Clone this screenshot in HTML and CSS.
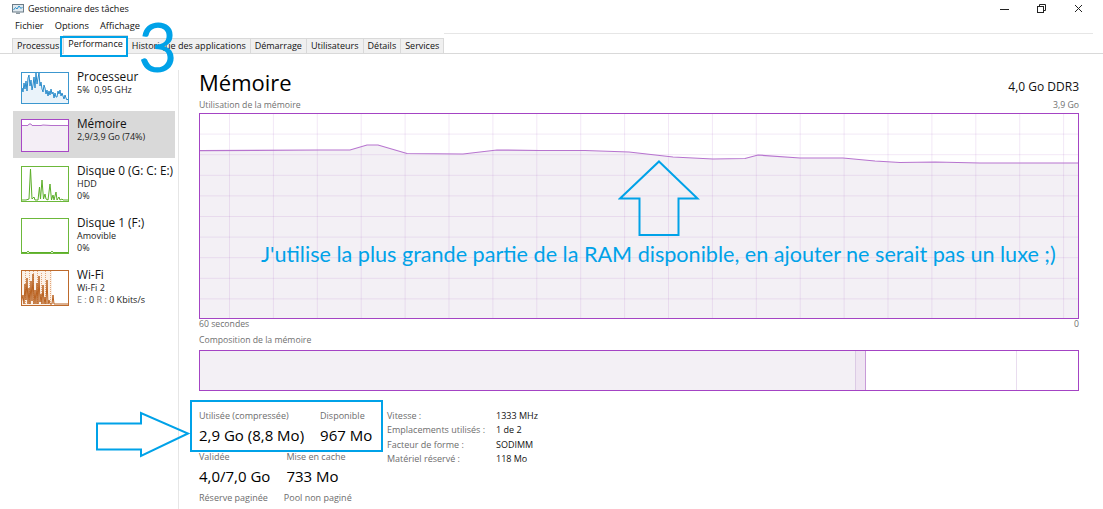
FILE: index.html
```html
<!DOCTYPE html>
<html lang="fr">
<head>
<meta charset="utf-8">
<title>Gestionnaire des tâches</title>
<link rel="stylesheet" href="styles.css">
</head>
<body>
<div class="window">
  <header class="titlebar">
    <svg class="app-icon" width="12" height="10" viewBox="0 0 12 10">
      <rect x="0.5" y="0.5" width="11" height="7.5" fill="#dfe8ee" stroke="#6b7c88"/>
      <polyline points="1.5,6 3.5,3.5 5,5 7,2 9,4.5 10.5,3" fill="none" stroke="#2a8fc9" stroke-width="1"/>
      <rect x="4" y="8.5" width="4" height="1.5" fill="#8a97a0"/>
    </svg>
    <span class="title">Gestionnaire des tâches</span>
    <div class="controls">
      <span class="ctl"><svg width="10" height="10" viewBox="0 0 10 10"><line x1="0" y1="5.5" x2="9" y2="5.5" stroke="#222" stroke-width="1"/></svg></span>
      <span class="ctl"><svg width="10" height="10" viewBox="0 0 10 10"><rect x="0.5" y="2.5" width="6" height="6" fill="none" stroke="#222"/><polyline points="2.5,2.5 2.5,0.5 8.5,0.5 8.5,6.5 6.5,6.5" fill="none" stroke="#222"/></svg></span>
      <span class="ctl"><svg width="10" height="10" viewBox="0 0 10 10"><line x1="1" y1="1" x2="8" y2="8" stroke="#222"/><line x1="8" y1="1" x2="1" y2="8" stroke="#222"/></svg></span>
    </div>
  </header>

  <nav class="menubar"><span>Fichier</span><span>Options</span><span>Affichage</span></nav>

  <div class="tabrow">
    <div class="tab">Processus</div>
    <div class="tab active">Performance</div>
    <div class="tab">Historique des applications</div>
    <div class="tab">Démarrage</div>
    <div class="tab">Utilisateurs</div>
    <div class="tab">Détails</div>
    <div class="tab">Services</div>
    <div class="tabfill"></div>
  </div>

  <div class="content">
    <aside class="sidebar">
      <div class="item">
        <svg class="thumb" width="48" height="32" viewBox="0 0 48 32">
          <polygon points="0,32 0,22 1,16 2,20 3,11 4,17 5,9 6,19 7,6 8,3 9,14 10,8 11,18 12,13 13,5 14,16 15,1 16,12 17,6 18,1 19,14 20,10 21,17 22,20 23,13 24,16 25,22 26,18 27,24 28,19 29,23 30,17 31,22 32,20 33,26 34,21 35,25 36,25 37,19 38,22 39,18 40,24 41,21 42,24 43,27 44,23 45,26 46,28 47,27 48,32" fill="#eaf3fa"/>
          <polyline points="0,22 1,16 2,20 3,11 4,17 5,9 6,19 7,6 8,3 9,14 10,8 11,18 12,13 13,5 14,16 15,1 16,12 17,6 18,1 19,14 20,10 21,17 22,20 23,13 24,16 25,22 26,18 27,24 28,19 29,23 30,17 31,22 32,20 33,26 34,21 35,25 36,25 37,19 38,22 39,18 40,24 41,21 42,24 43,27 44,23 45,26 46,28 47,27" fill="none" stroke="#2b8ccb" stroke-width="1"/>
          <rect x="0.5" y="0.5" width="47" height="31" fill="none" stroke="#3c97cf"/>
        </svg>
        <div class="itext">
          <div class="iname">Processeur</div>
          <div class="isub">5%&nbsp; 0,95 GHz</div>
        </div>
      </div>

      <div class="item selected">
        <svg class="thumb" width="48" height="33" viewBox="0 0 48 33">
          <rect x="0" y="0" width="48" height="33" fill="#fff"/>
          <polygon points="0,33 0,6.5 7,6.5 8,5 10,5 11,6.5 20,6.5 22,6 30,6.5 48,6.5 48,33" fill="#f4eef6"/>
          <polyline points="0,6.5 7,6.5 8,5 10,5 11,6.5 20,6.5 22,6 30,6.5 48,6.5" fill="none" stroke="#b46fcb" stroke-width="1"/>
          <rect x="0.5" y="0.5" width="47" height="32" fill="none" stroke="#a847c6"/>
        </svg>
        <div class="itext">
          <div class="iname">Mémoire</div>
          <div class="isub">2,9/3,9 Go (74%)</div>
        </div>
      </div>

      <div class="item tall">
        <svg class="thumb" width="48" height="36" viewBox="0 0 48 36">
          <polyline points="0,34 5,34 8,33 9.5,3 11,33 13,31 14,34 17,34 18.5,21 19.5,33 21,14 22.5,33 24,28 25,33 27,34 29,18 30.5,34 32,29 33,34 35,26 36,34 38,31 39,34 41,33 42,34 48,34" fill="none" stroke="#5bae28" stroke-width="1"/>
          <rect x="0.5" y="0.5" width="47" height="35" fill="none" stroke="#6cb83a"/>
        </svg>
        <div class="itext">
          <div class="iname">Disque 0 (G: C: E:)</div>
          <div class="isub">HDD</div>
          <div class="isub">0%</div>
        </div>
      </div>

      <div class="item tall">
        <svg class="thumb" width="48" height="36" viewBox="0 0 48 36">
          <polyline points="0,34.5 6,34.5 7,33 8,34.5 30,34.5 31,33 32,34.5 48,34.5" fill="none" stroke="#5bae28" stroke-width="1"/>
          <rect x="0.5" y="0.5" width="47" height="35" fill="none" stroke="#6cb83a"/>
        </svg>
        <div class="itext">
          <div class="iname">Disque 1 (F:)</div>
          <div class="isub">Amovible</div>
          <div class="isub">0%</div>
        </div>
      </div>

      <div class="item tall">
        <svg class="thumb" width="48" height="36" viewBox="0 0 48 36">
          <rect x="1" y="1" width="30" height="34" fill="#fbf1e8"/>
          <g stroke="#e4a577" stroke-width="1" stroke-dasharray="1 1">
            <line x1="4.5" y1="1" x2="4.5" y2="34"/>
            <line x1="8.5" y1="1" x2="8.5" y2="34"/>
            <line x1="12.5" y1="1" x2="12.5" y2="34"/>
            <line x1="16.5" y1="1" x2="16.5" y2="34"/>
            <line x1="20.5" y1="3" x2="20.5" y2="34"/>
            <line x1="24.5" y1="1" x2="24.5" y2="34"/>
            <line x1="29.5" y1="1" x2="29.5" y2="34"/>
          </g>
          <polyline points="0,34 2,25 3,34 4,14 5,30 6,8 7,34 8,18 9,34 10,11 11,31 12,4 13,34 14,20 15,34 16,13 17,34 18,6 19,32 20,24 21,34 22,15 23,34 24,27 25,34 26,10 27,34 28,30 29,34 31,34 32,25 33,34 48,34" fill="none" stroke="#b9611f" stroke-width="1"/>
          <rect x="0.5" y="0.5" width="47" height="35" fill="none" stroke="#bd6a2c"/>
        </svg>
        <div class="itext">
          <div class="iname">Wi-Fi</div>
          <div class="isub">Wi-Fi 2</div>
          <div class="isub"><span class="dim">E :</span> 0 <span class="dim">R :</span> 0 Kbits/s</div>
        </div>
      </div>
    </aside>

    <div class="divider"></div>

    <main class="main">
      <div class="head">
        <h1>Mémoire</h1>
        <span class="spec">4,0 Go DDR3</span>
      </div>
      <div class="axis top"><span>Utilisation de la mémoire</span><span>3,9 Go</span></div>
      <div class="graph">
        <svg width="878" height="204" viewBox="1 1 878 204">
          <defs>
            <pattern id="grid" x="30" y="0" width="43.9" height="20.6" patternUnits="userSpaceOnUse">
              <line x1="0.5" y1="0" x2="0.5" y2="20.6" stroke="#9a4fbb" stroke-opacity="0.13" stroke-width="1"/>
              <line x1="0" y1="0.5" x2="43.9" y2="0.5" stroke="#9a4fbb" stroke-opacity="0.13" stroke-width="1"/>
            </pattern>
          </defs>
          <polygon points="0,37.7 121,37 151,37 168,32 179,32 208,40.5 264,41 298,37 341,37.5 386,37.5 430,39 474,44 514,46 546,45.5 559,42 601,45 644,45 676,48 701,49.5 736,49 781,50 880,50 880,206 0,206" fill="#f3f0f5"/>
          <rect x="0" y="0" width="880" height="206" fill="url(#grid)"/>
          <polyline points="0,37.7 121,37 151,37 168,32 179,32 208,40.5 264,41 298,37 341,37.5 386,37.5 430,39 474,44 514,46 546,45.5 559,42 601,45 644,45 676,48 701,49.5 736,49 781,50 880,50" fill="none" stroke="#b774cf" stroke-width="1.2"/>
        </svg>
        <p class="note">J'utilise la plus grande partie de la RAM disponible, en ajouter ne serait pas un luxe ;)</p>
      </div>
      <div class="axis"><span>60 secondes</span><span>0</span></div>
      <div class="axis comp-label"><span>Composition de la mémoire</span></div>
      <div class="comp">
        <div class="seg used"></div>
        <div class="seg modified"></div>
        <div class="seg standby"></div>
        <div class="seg free"></div>
      </div>

      <div class="stats">
        <div class="stats-left">
          <div class="srow">
            <div class="stat"><div class="slabel">Utilisée (compressée)</div><div class="sval">2,9 Go (8,8 Mo)</div></div>
            <div class="stat"><div class="slabel">Disponible</div><div class="sval">967 Mo</div></div>
          </div>
          <div class="srow">
            <div class="stat"><div class="slabel">Validée</div><div class="sval">4,0/7,0 Go</div></div>
            <div class="stat"><div class="slabel">Mise en cache</div><div class="sval">733 Mo</div></div>
          </div>
          <div class="srow">
            <div class="stat"><div class="slabel">Réserve paginée</div></div>
            <div class="stat"><div class="slabel">Pool non paginé</div></div>
          </div>
        </div>
        <dl class="specs">
          <dt>Vitesse :</dt><dd>1333 MHz</dd>
          <dt>Emplacements utilisés :</dt><dd>1 de 2</dd>
          <dt>Facteur de forme :</dt><dd>SODIMM</dd>
          <dt>Matériel réservé :</dt><dd>118 Mo</dd>
        </dl>
      </div>
    </main>
  </div>

  <div class="hl-tab"></div>
  <div class="big3">3</div>
  <div class="hl-stats"></div>
  <svg class="arrow-up" width="82" height="78" viewBox="618 159 82 78">
    <polygon points="659,161.5 697.5,198.5 678.5,198.5 678.5,235 639.5,235 639.5,198.5 620,198.5" fill="none" stroke="#00a2e8" stroke-width="2" stroke-linejoin="miter"/>
  </svg>
  <svg class="arrow-right" width="96" height="50" viewBox="95 410 96 50">
    <polygon points="97,423.5 141,423.5 141,413 188,433.5 141,456 141,449.5 97,449.5" fill="none" stroke="#00a2e8" stroke-width="2"/>
  </svg>
</div>
</body>
</html>
```

FILE: styles.css
```css
* { box-sizing: border-box; }

html, body {
  margin: 0;
  padding: 0;
  background: #fff;
}

body {
  width: 1103px;
  height: 509px;
  overflow: hidden;
  font-family: "Open Sans", "Noto Sans", sans-serif;
  color: #000;
}

.window {
  position: relative;
  width: 1103px;
  height: 509px;
}

/* Title bar */
.titlebar {
  height: 18px;
  display: flex;
  align-items: center;
  padding-left: 12px;
  font-size: 9px;
  line-height: 18px;
  color: #111;
}

.app-icon { margin-right: 4px; flex: none; }

.controls {
  margin-left: auto;
  margin-right: 6px;
  display: flex;
  height: 18px;
}

.ctl {
  width: 37px;
  height: 18px;
  display: flex;
  align-items: center;
  justify-content: center;
}

/* Menu */
.menubar {
  height: 15px;
  display: flex;
  gap: 11px;
  padding-left: 15px;
  font-size: 9.3px;
  line-height: 15px;
  color: #111;
}

/* Tabs */
.tabrow {
  height: 21px;
  display: flex;
  align-items: flex-end;
  padding-left: 12px;
  border-bottom: 1px solid #d9d9d9;
}

.tab {
  height: 15px;
  padding: 0 4px;
  margin-right: -1px;
  border: 1px solid #d9d9d9;
  border-bottom: none;
  background: #f0f0f0;
  font-size: 9px;
  line-height: 13px;
  color: #111;
  white-space: nowrap;
}

.tab.active {
  position: relative;
  height: 19px;
  margin-bottom: -1px;
  background: #fff;
  line-height: 15px;
  z-index: 1;
}

.tabfill {
  flex: 1;
  align-self: stretch;
  margin-left: 1px;
  margin-right: 10px;
  border-top: 1px solid #e6e6e6;
}

/* Content */
.content {
  display: flex;
  height: 455px;
}

.sidebar {
  width: 178px;
  flex: none;
  padding-top: 10px;
}

.item {
  display: flex;
  align-items: flex-start;
  gap: 8px;
  height: 47px;
  margin: 0 3px 0 13px;
  padding: 8px 0 0 8px;
}

.item.tall { height: 52px; }

.item.selected { background: #d9d9d9; }

.thumb { flex: none; display: block; }

.itext {
  margin-top: -3px;
  white-space: nowrap;
}

.iname {
  font-size: 11.8px;
  line-height: 15px;
  color: #111;
}

.isub {
  font-size: 9px;
  line-height: 12px;
  color: #222;
}

.dim { color: #777; }

.divider {
  width: 1px;
  flex: none;
  margin-top: 16px;
  background: #e6e6e6;
}

.main {
  flex: 1;
  padding: 14px 25px 0 20px;
}

.head {
  display: flex;
  justify-content: space-between;
  align-items: baseline;
}

.head h1 {
  margin: 0;
  font-size: 22px;
  line-height: 28px;
  font-weight: 400;
  color: #000;
}

.spec {
  font-size: 12px;
  color: #111;
}

.axis {
  display: flex;
  justify-content: space-between;
  font-size: 8.7px;
  line-height: 11px;
  color: #707070;
}

.axis.top { margin-top: 4px; }

.axis.comp-label { margin-top: 5px; }

.graph {
  position: relative;
  margin-top: 2px;
  width: 880px;
  height: 206px;
  border: 1px solid #a444c4;
}

.graph svg { display: block; }

.note {
  position: absolute;
  left: 61px;
  top: 128px;
  margin: 0;
  font-family: Lato, "Open Sans", sans-serif;
  font-size: 21.6px;
  line-height: 24px;
  color: #00a2e8;
  white-space: nowrap;
}

.comp {
  display: flex;
  margin-top: 4px;
  width: 880px;
  height: 41px;
  border: 1px solid #a444c4;
}

.seg { height: 100%; }
.seg.used { width: 655px; background: #f3f0f5; }
.seg.modified {
  width: 11px;
  background: #efe5f2;
  border-left: 1px solid #dccbe5;
  border-right: 1px solid #c89ad8;
}
.seg.standby { width: 151px; background: #fff; border-right: 1px solid #e9ddef; }
.seg.free { flex: 1; background: #fff; }

/* Stats */
.stats {
  display: flex;
  align-items: flex-start;
  margin-top: 19px;
}

.stats-left {
  width: 188px;
  display: flex;
  flex-direction: column;
  gap: 6px;
}

.srow {
  display: flex;
  gap: 16px;
}

.slabel {
  font-size: 9px;
  line-height: 12px;
  color: #6d6d6d;
  white-space: nowrap;
}

.sval {
  margin-top: 3px;
  font-size: 15px;
  line-height: 20px;
  color: #000;
  white-space: nowrap;
}

.specs {
  margin: -1px 0 0 0;
  display: grid;
  grid-template-columns: 109px auto;
  align-content: start;
  font-size: 9px;
  line-height: 14.4px;
}

.specs dt { color: #6d6d6d; }
.specs dd { margin: 0; color: #111; }

/* Annotations (drawn over the screenshot) */
.hl-tab {
  position: absolute;
  left: 60px;
  top: 36px;
  width: 68px;
  height: 21px;
  border: 2px solid #00a2e8;
  z-index: 2;
}

.big3 {
  position: absolute;
  left: 138px;
  top: 6px;
  font-family: Lato, "Open Sans", sans-serif;
  font-size: 68px;
  line-height: 80px;
  color: #00a2e8;
  z-index: 3;
}

.hl-stats {
  position: absolute;
  left: 190px;
  top: 400px;
  width: 193px;
  height: 52px;
  border: 2px solid #00a2e8;
}

.arrow-up {
  position: absolute;
  left: 618px;
  top: 159px;
}

.arrow-right {
  position: absolute;
  left: 95px;
  top: 410px;
}
```
